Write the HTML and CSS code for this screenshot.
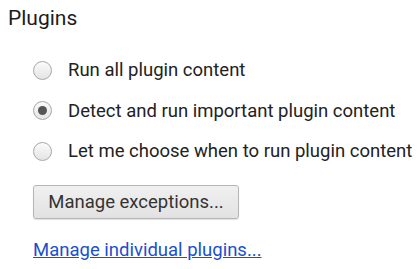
FILE: index.html
```html
<!DOCTYPE html>
<html>
<head>
<meta charset="utf-8">
<link rel="stylesheet" href="styles.css">
</head>
<body>
<div class="page">
  <h1 class="title">Plugins</h1>
  <div class="options">
    <label class="option"><span class="radio"></span><span class="label">Run all plugin content</span></label>
    <label class="option"><span class="radio checked"></span><span class="label">Detect and run important plugin content</span></label>
    <label class="option"><span class="radio"></span><span class="label">Let me choose when to run plugin content</span></label>
  </div>
  <div class="actions">
    <button class="btn">Manage exceptions...</button>
    <a class="link" href="#">Manage individual plugins...</a>
  </div>
</div>
</body>
</html>
```

FILE: styles.css
```css
html, body {
  margin: 0;
  padding: 0;
  background: #ffffff;
}
.page {
  font-family: Roboto, "Liberation Sans", sans-serif;
  color: #222222;
  padding: 5px 0 0 8px;
}
.title {
  margin: 0;
  font-size: 21px;
  font-weight: 400;
  line-height: 27px;
  color: #1c1c1c;
}
.options {
  display: flex;
  flex-direction: column;
  padding: 18px 0 0 25px;
}
.option {
  display: flex;
  align-items: center;
  height: 40.5px;
}
.radio {
  box-sizing: border-box;
  width: 19px;
  height: 19px;
  border-radius: 50%;
  border: 1px solid #a8a8a8;
  background: linear-gradient(#fbfbfb, #e4e4e4);
  margin-right: 16px;
  display: flex;
  align-items: center;
  justify-content: center;
  flex: none;
}
.radio.checked::after {
  content: "";
  width: 9px;
  height: 9px;
  border-radius: 50%;
  background: #555555;
}
.label {
  font-size: 18.5px;
  color: #222222;
}
.actions {
  display: flex;
  flex-direction: column;
  align-items: flex-start;
  padding: 13px 0 0 25px;
}
.btn {
  box-sizing: border-box;
  width: 206px;
  height: 34px;
  font-family: Roboto, "Liberation Sans", sans-serif;
  font-size: 18.5px;
  color: #333333;
  border: 1px solid #b5b5b5;
  border-radius: 3px;
  background: linear-gradient(#f0f0f0, #e2e2e2);
  box-shadow: 0 1px 1px rgba(0,0,0,0.12);
  padding: 0;
}
.link {
  margin-top: 20px;
  font-size: 18.5px;
  color: #1a4fd0;
  text-decoration: underline;
}
```
